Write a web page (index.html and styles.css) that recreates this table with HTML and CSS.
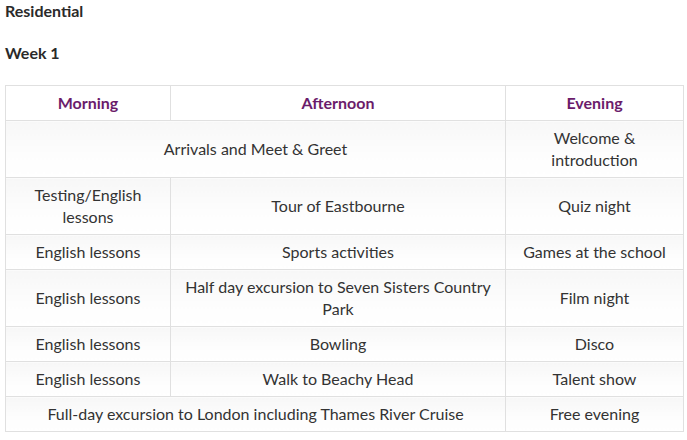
FILE: index.html
```html
<!DOCTYPE html>
<html>
<head>
<meta charset="utf-8">
<link rel="stylesheet" href="styles.css">
</head>
<body>
<p class="title">Residential</p>
<p class="title week">Week 1</p>
<table class="schedule">
  <colgroup>
    <col class="c1"><col class="c2"><col class="c3">
  </colgroup>
  <thead>
    <tr><th>Morning</th><th>Afternoon</th><th>Evening</th></tr>
  </thead>
  <tbody>
    <tr><td colspan="2">Arrivals and Meet &amp; Greet</td><td>Welcome &amp;<br>introduction</td></tr>
    <tr><td>Testing/English<br>lessons</td><td>Tour of Eastbourne</td><td>Quiz night</td></tr>
    <tr><td>English lessons</td><td>Sports activities</td><td>Games at the school</td></tr>
    <tr><td>English lessons</td><td>Half day excursion to Seven Sisters Country<br>Park</td><td>Film night</td></tr>
    <tr><td>English lessons</td><td>Bowling</td><td>Disco</td></tr>
    <tr><td>English lessons</td><td>Walk to Beachy Head</td><td>Talent show</td></tr>
    <tr><td colspan="2">Full-day excursion to London including Thames River Cruise</td><td>Free evening</td></tr>
  </tbody>
</table>
</body>
</html>
```

FILE: styles.css
```css
html, body {
  margin: 0;
  padding: 0;
  background: #fff;
}
body {
  padding: 0 5px;
  font-family: Lato, "Liberation Sans", sans-serif;
  color: #2b2b2b;
}
.title {
  margin: 0;
  font-size: 16px;
  font-weight: 700;
  line-height: 22px;
  color: #2a2a2a;
}
.week {
  margin-top: 20px;
}
.schedule {
  margin-top: 21px;
  border-collapse: collapse;
  table-layout: fixed;
  width: 678px;
  font-size: 16px;
  line-height: 22px;
}
.c1 { width: 165px; }
.c2 { width: 335px; }
.c3 { width: 178px; }
.schedule th,
.schedule td {
  border: 1px solid #e0e0e0;
  padding: 6px 6px;
  text-align: center;
  vertical-align: middle;
}
.schedule th {
  color: #6b1c6b;
  font-weight: 700;
  background: #fff;
}
.schedule td {
  color: #333;
  background: linear-gradient(#f7f7f7, #fdfdfd 60%, #fff);
}
```
